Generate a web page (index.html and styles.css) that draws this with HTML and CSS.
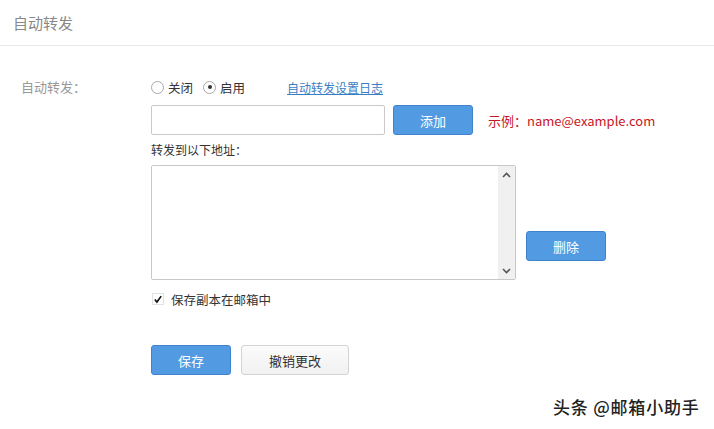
FILE: index.html
```html
<!DOCTYPE html>
<html lang="zh-CN">
<head>
    <meta charset="UTF-8">
    <title>自动转发</title>
    <link rel="stylesheet" href="styles.css">
</head>
<body>

    <header class="header">
        <h1>自动转发</h1>
    </header>

    <main class="form">
        <div class="label">自动转发：</div>

        <div class="fields">
            <div class="radio-row">
                <label class="radio"><span class="dot"></span>关闭</label>
                <label class="radio on"><span class="dot"></span>启用</label>
                <a class="log-link" href="#">自动转发设置日志</a>
            </div>

            <div class="add-row">
                <input type="text" class="addr-input">
                <button class="btn btn-blue">添加</button>
                <span class="hint">示例：name@example.com</span>
            </div>

            <div class="sub-label">转发到以下地址：</div>

            <div class="list-row">
                <div class="list-box">
                    <textarea class="list-text"></textarea>
                    <div class="scrollbar">
                        <svg width="9" height="6" viewBox="0 0 9 6"><path d="M1 5 L4.5 1.5 L8 5" fill="none" stroke="#555" stroke-width="1.6"/></svg>
                        <svg width="9" height="6" viewBox="0 0 9 6"><path d="M1 1 L4.5 4.5 L8 1" fill="none" stroke="#555" stroke-width="1.6"/></svg>
                    </div>
                </div>
                <button class="btn btn-blue btn-del">删除</button>
            </div>

            <label class="check-row">
                <span class="check">
                    <svg width="11" height="11" viewBox="0 0 11 11"><path d="M2 5.5 L4.3 8.3 L9 1.8" fill="none" stroke="#111" stroke-width="1.8"/></svg>
                </span>
                保存副本在邮箱中
            </label>

            <div class="actions">
                <button class="btn btn-blue">保存</button>
                <button class="btn btn-gray">撤销更改</button>
            </div>
        </div>
    </main>

    <div class="watermark">头条 @邮箱小助手</div>

</body>
</html>
```

FILE: styles.css
```css
body {
    margin: 0;
    background-color: #fff;
    font-family: "Noto Sans CJK SC", "Noto Sans", sans-serif;
    color: #333;
    font-size: 12px;
}

.header {
    height: 45px;
    border-bottom: 1px solid #e8e8e8;
    display: flex;
    align-items: center;
    padding-left: 13px;
}

.header h1 {
    margin: 0;
    font-size: 15px;
    font-weight: normal;
    color: #888;
}

.form {
    display: flex;
    padding: 31px 0 0 21px;
}

.label {
    width: 130px;
    font-size: 13px;
    color: #999;
    line-height: 20px;
}

.fields {
    display: flex;
    flex-direction: column;
}

.radio-row {
    display: flex;
    align-items: center;
    height: 20px;
    font-size: 12.5px;
}

.radio {
    display: flex;
    align-items: center;
    margin-right: 10px;
    color: #333;
}

.radio .dot {
    width: 11px;
    height: 11px;
    border: 1px solid #a8a8a8;
    border-radius: 50%;
    margin-right: 4px;
    display: flex;
    align-items: center;
    justify-content: center;
    background: #fff;
}

.radio.on .dot::after {
    content: "";
    width: 4px;
    height: 4px;
    border-radius: 50%;
    background: #333;
}

.log-link {
    margin-left: 32px;
    color: #3b7dc4;
    font-size: 12px;
}

.add-row {
    display: flex;
    align-items: center;
    margin-top: 8px;
}

.addr-input {
    box-sizing: border-box;
    width: 234px;
    height: 30px;
    border: 1px solid #cacaca;
    border-radius: 2px;
    margin: 0;
}

.btn {
    box-sizing: border-box;
    height: 30px;
    width: 80px;
    border-radius: 3px;
    font-family: inherit;
    font-size: 13px;
    cursor: pointer;
    padding: 0;
}

.btn-blue {
    background-color: #529be2;
    border: 1px solid #3f83cc;
    color: #fff;
}

.btn-gray {
    width: 108px;
    background: linear-gradient(#fbfbfb, #f1f1f1);
    border: 1px solid #d3d3d3;
    color: #333;
}

.add-row .btn {
    margin-left: 8px;
}

.hint {
    margin-left: 15px;
    color: #c8161d;
    font-size: 13px;
}

.sub-label {
    margin-top: 5px;
    line-height: 20px;
    font-size: 12px;
    color: #333;
}

.list-row {
    display: flex;
    margin-top: 5px;
}

.list-box {
    box-sizing: border-box;
    width: 365px;
    height: 115px;
    border: 1px solid #c8c8c8;
    border-radius: 2px;
    display: flex;
}

.list-text {
    flex: 1;
    border: none;
    resize: none;
    outline: none;
    margin: 0;
}

.scrollbar {
    width: 17px;
    background-color: #f0f0f0;
    display: flex;
    flex-direction: column;
    justify-content: space-between;
    align-items: center;
    padding: 6px 0 5px;
}

.btn-del {
    align-self: flex-end;
    margin: 0 0 19px 10px;
}

.check-row {
    display: flex;
    align-items: center;
    margin-top: 9px;
    height: 20px;
    font-size: 12.5px;
    color: #333;
}

.check {
    box-sizing: border-box;
    width: 12px;
    height: 12px;
    margin: 0 7px 0 1px;
    display: flex;
    align-items: center;
    justify-content: center;
    background: #fff;
    border: 1px solid #e2e2e2;
}

.actions {
    display: flex;
    gap: 10px;
    margin-top: 36px;
}

.watermark {
    position: absolute;
    left: 553px;
    top: 394px;
    font-size: 17px;
    font-weight: 500;
    letter-spacing: 0.8px;
    color: #222;
    text-shadow: 0 0 2px #fff;
}
```
